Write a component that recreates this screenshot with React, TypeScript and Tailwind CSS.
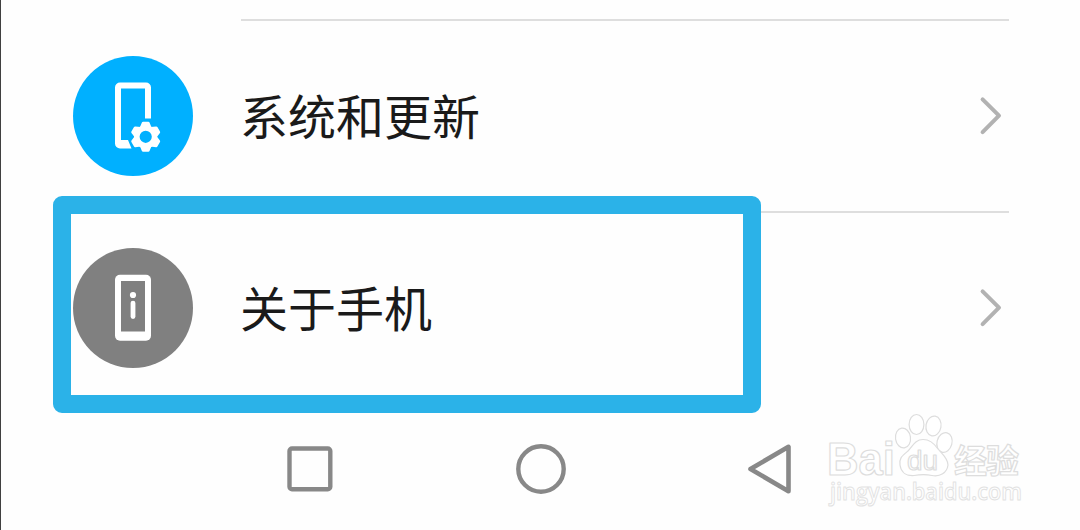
import type { ReactNode } from "react";

function Chevron() {
  return (
    <svg width="24" height="40" viewBox="0 0 24 40" fill="none">
      <path d="M3.6 3.3 20 19.7 3.6 36.1" stroke="#b2b2b2" strokeWidth="4" strokeLinecap="round" strokeLinejoin="round" />
    </svg>
  );
}

function SystemIcon() {
  return (
    <svg width="120" height="120" viewBox="0 0 120 120">
      <circle cx="60" cy="60" r="60" fill="#00b0ff" />
      <path
        d="M47 26.5H73a5 5 0 0 1 5 5V62.5H72V32.5H48V84H55L58.5 92.5H47a5 5 0 0 1-5-5V31.5a5 5 0 0 1 5-5Z"
        fill="white"
      />
      <g transform="translate(72.7 80.8)">
        <circle r="8.8" strokeWidth="5.4" fill="#00b0ff" stroke="white" />
        <g fill="white">
          {[0, 60, 120, 180, 240, 300].map((a) => (
            <path key={a} d="M-6-9-3.8-14.2Q-3.5-15-2.6-15H2.6Q3.5-15 3.8-14.2L6-9Z" transform={`rotate(${a})`} />
          ))}
        </g>
      </g>
    </svg>
  );
}

function AboutIcon() {
  return (
    <svg width="120" height="120" viewBox="0 0 120 120">
      <circle cx="60" cy="60" r="60" fill="#808080" />
      <rect x="42" y="26.8" width="36" height="66" rx="5" fill="white" />
      <rect x="48" y="33" width="24" height="50.5" fill="#808080" />
      <circle cx="60" cy="47" r="3.1" fill="white" />
      <rect x="57.6" y="52.7" width="4.8" height="18.3" rx="2.4" fill="white" />
    </svg>
  );
}

function Row({ icon, label }: { icon: ReactNode; label: string }) {
  return (
    <div className="flex h-48 items-center pl-[73px]">
      <div className="shrink-0 pt-0.5">{icon}</div>
      <div className="ml-12 flex h-48 w-[768px] items-center justify-between border-t-2 border-[#dedede] pr-1.5">
        <span className="-ml-px pb-1 text-[48px] leading-none text-[#1a1a1a]">{label}</span>
        <Chevron />
      </div>
    </div>
  );
}

function Watermark() {
  return (
    <svg
      className="absolute top-[405px] left-[820px]"
      width="210"
      height="110"
      viewBox="0 0 210 110"
      fill="white"
      stroke="#dddddd"
      strokeWidth="1.2"
      strokeLinejoin="round"
      fontFamily='"Liberation Sans", "Noto Sans CJK SC", sans-serif'
    >
      <text x="6" y="69.5" fontSize="46" fontWeight="700" textLength="68" lengthAdjust="spacingAndGlyphs">Bai</text>
      <ellipse cx="82" cy="33" rx="7.5" ry="10" transform="rotate(-8 82 33)" />
      <ellipse cx="95.5" cy="19.5" rx="7.4" ry="10" />
      <ellipse cx="112.5" cy="21" rx="7.5" ry="10" transform="rotate(10 112.5 21)" />
      <ellipse cx="123.5" cy="37.5" rx="7.5" ry="10" transform="rotate(15 123.5 37.5)" />
      <path d="M102 34.5C94 34.5 92 41 87 46C81 51 78 53 79 60C80 68 86 71 93 70.5C99 69.5 106 69.5 111 70.5C119 72 126 68 127 60C127 53 121 49 117 44C113 38 109 34.5 102 34.5Z" />
      <text x="86" y="64.5" fontSize="27" textLength="31" lengthAdjust="spacingAndGlyphs">du</text>
      <text x="133" y="67.5" fontSize="33" fontWeight="700" fontFamily='"Noto Sans CJK SC", sans-serif' textLength="65">经验</text>
      <text x="9" y="95" fontSize="24" fontWeight="600" fontFamily='"Open Sans", sans-serif' stroke="#e2e2e2" strokeWidth="1" textLength="192" lengthAdjust="spacingAndGlyphs">jingyan.baidu.com</text>
    </svg>
  );
}

export default function App() {
  return (
    <main className="relative h-[530px] w-[1080px] overflow-hidden border-l border-[#404040] bg-[#fefefe] font-['Noto_Sans_CJK_SC',sans-serif]">
      <div className="-ml-px pt-[19px]">
        <Row icon={<SystemIcon />} label="系统和更新" />
        <Row icon={<AboutIcon />} label="关于手机" />
      </div>
      <nav className="-ml-px flex h-[130px] items-center pt-0.5 pl-[284px]">
        <svg width="52" height="52" viewBox="0 0 52 52" fill="none" stroke="#888888" strokeWidth="4.4">
          <rect x="5.5" y="5.5" width="40.8" height="40.8" rx="2.5" />
        </svg>
        <svg className="ml-[179px]" width="52" height="52" viewBox="0 0 52 52" fill="none" stroke="#888888" strokeWidth="4.4">
          <circle cx="26" cy="26" r="22.7" />
        </svg>
        <svg className="ml-[179px]" width="52" height="52" viewBox="0 0 52 52" fill="none" stroke="#888888" strokeWidth="4.6" strokeLinejoin="round">
          <path d="M4.5 26 42.5 3.8V48.2Z" />
        </svg>
      </nav>
      <div className="absolute top-[196px] left-[52px] h-[217px] w-[708px] rounded-[9px] border-[18px] border-[#2bb2e8]" />
      <Watermark />
    </main>
  );
}
